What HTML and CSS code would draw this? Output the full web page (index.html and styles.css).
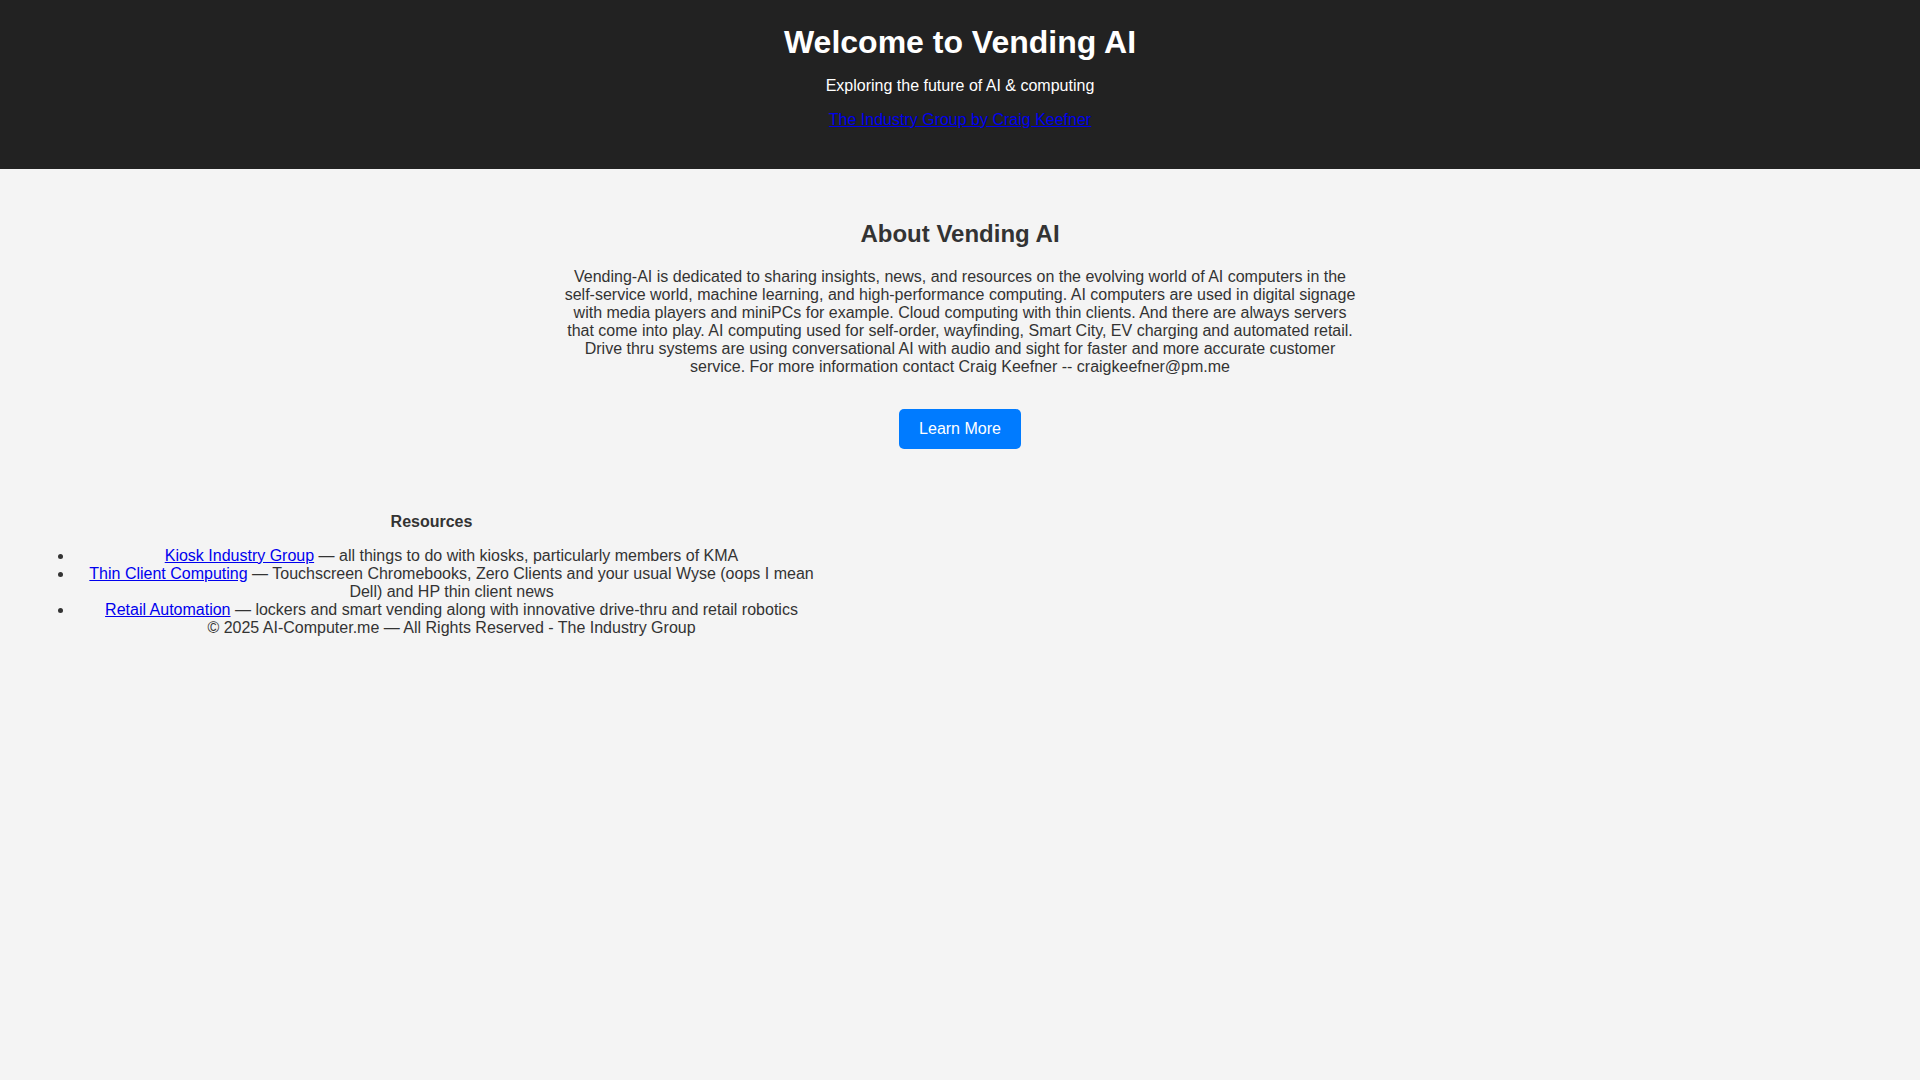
FILE: index.html
```html
<!DOCTYPE html>
<html lang="en">
<head>
<meta charset="utf-8">
<title>Vending AI</title>
<link rel="stylesheet" href="styles.css">
</head>
<body>
<header class="site-header">
  <h1 class="site-title">Welcome to Vending AI</h1>
  <p class="tagline">Exploring the future of AI &amp; computing</p>
  <p class="header-link"><a href="#">The Industry Group by Craig Keefner</a></p>
</header>
<main>
  <section class="about">
    <h2 class="about-title">About Vending AI</h2>
    <p class="about-text">Vending-AI is dedicated to sharing insights, news, and resources on the evolving world of AI computers in the self-service world, machine learning, and high-performance computing. AI computers are used in digital signage with media players and miniPCs for example. Cloud computing with thin clients. And there are always servers that come into play. AI computing used for self-order, wayfinding, Smart City, EV charging and automated retail. Drive thru systems are using conversational AI with audio and sight for faster and more accurate customer service. For more information contact Craig Keefner -- craigkeefner@pm.me</p>
    <div class="cta"><a class="btn" href="#">Learn More</a></div>
  </section>
  <footer class="site-footer">
    <div class="resources">
      <h3 class="resources-title">Resources</h3>
      <ul class="resource-list">
        <li><a href="#">Kiosk Industry Group</a> — all things to do with kiosks, particularly members of KMA</li>
        <li><a href="#">Thin Client Computing</a> — Touchscreen Chromebooks, Zero Clients and your usual Wyse (oops I mean Dell) and HP thin client news</li>
        <li><a href="#">Retail Automation</a> — lockers and smart vending along with innovative drive-thru and retail robotics</li>
        <li class="copyright">© 2025 AI-Computer.me — All Rights Reserved - The Industry Group</li>
      </ul>
    </div>
  </footer>
</main>
</body>
</html>
```

FILE: styles.css
```css
html, body {
  margin: 0;
  padding: 0;
}

body {
  font-family: "Liberation Sans", Arial, sans-serif;
  font-size: 16px;
  background: #f4f4f4;
  color: #333;
  min-height: 1080px;
}

.site-header {
  background: #222;
  color: #fff;
  text-align: center;
  padding: 24px 20px 24px;
}

.site-title {
  font-size: 32px;
  font-weight: bold;
  margin: 0;
  line-height: normal;
}

.tagline {
  margin: 16px 0;
}

.header-link {
  margin: 16px 0;
}

.header-link a {
  color: #0000ee;
}

.about {
  padding: 31px 20px 30px;
  text-align: center;
}

.about-title {
  font-size: 24px;
  margin: 19.92px 0;
}

.about-text {
  max-width: 800px;
  margin: 16px auto;
}

.cta {
  margin-top: 33px;
}

.btn {
  display: inline-block;
  background: #007bff;
  color: #fff;
  text-decoration: none;
  padding: 10px 20px;
  line-height: 20px;
  border-radius: 5px;
}

.site-footer {
  padding: 18px 34px 0;
}

.resources {
  width: 795px;
  text-align: center;
}

.resources-title {
  font-size: 16px;
  margin: 16px 0;
}

.resource-list {
  margin: 15px 0;
  padding-left: 40px;
}

.resource-list a {
  color: #0000ee;
}

.copyright {
  list-style: none;
}
```
